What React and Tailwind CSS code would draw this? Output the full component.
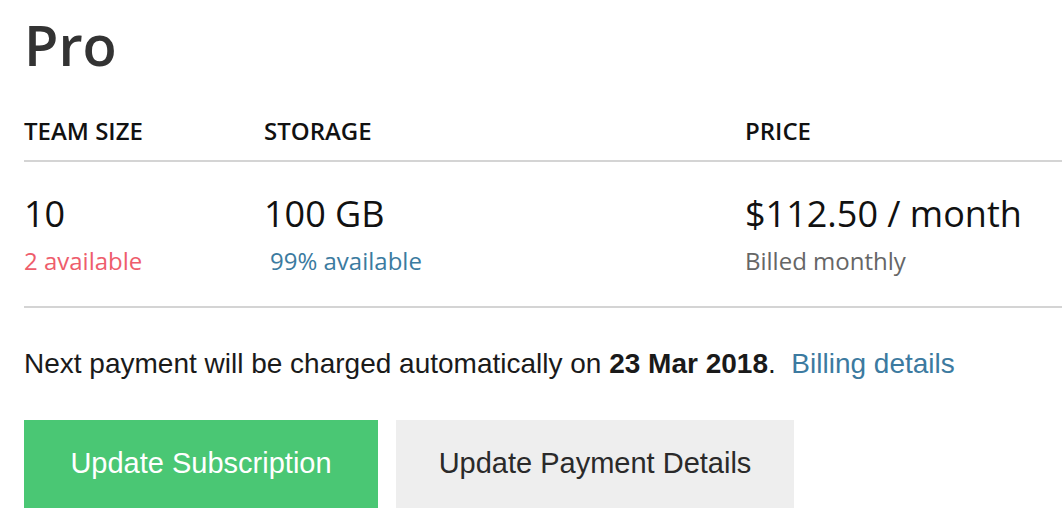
export default function App() {
    return (
        <div className="w-[1062px] h-[528px] overflow-hidden bg-white pl-6" style={{ fontFamily: '"Open Sans", sans-serif' }}>
            <h1 className="pt-[16px] text-[56px] leading-none font-semibold text-[#333333]">Pro</h1>

            <div className="mt-[47px] grid grid-cols-[240px_481px_1fr] border-b-2 border-[#d4d4d4] pb-[17px] text-[24px] leading-none font-semibold uppercase text-[#111111]">
                <div>Team Size</div>
                <div>Storage</div>
                <div>Price</div>
            </div>

            <div className="grid grid-cols-[240px_481px_1fr] border-b-2 border-[#d4d4d4] pt-[34px] pb-[33px]">
                <div>
                    <div className="text-[36px] leading-none text-[#111111]">10</div>
                    <div className="mt-[17px] text-[24px] leading-none text-[#ee5d6c]">2 available</div>
                </div>
                <div>
                    <div className="text-[36px] leading-none text-[#111111]">100 GB</div>
                    <div className="mt-[17px] pl-[6px] text-[24px] leading-none text-[#3b7ba0]">99% available</div>
                </div>
                <div>
                    <div className="text-[36px] leading-none text-[#111111]">$112.50 / month</div>
                    <div className="mt-[17px] text-[24px] leading-none text-[#666666]">Billed monthly</div>
                </div>
            </div>

            <p className="mt-[42px] text-[28px] leading-none text-[#1a1a1a]" style={{ fontFamily: '"Liberation Sans", Arial, sans-serif' }}>
                Next payment will be charged automatically on <b>23 Mar 2018</b>.&nbsp; <a href="#" className="text-[#3c7aa0]">Billing details</a>
            </p>

            <div className="mt-[42px] flex gap-[18px]" style={{ fontFamily: '"Liberation Sans", Arial, sans-serif' }}>
                <button className="w-[354px] h-[88px] bg-[#4ac774] text-white text-[29px]">Update Subscription</button>
                <button className="w-[398px] h-[88px] bg-[#eeeeee] text-[#2a2a2a] text-[29px]">Update Payment Details</button>
            </div>
        </div>
    )
}
